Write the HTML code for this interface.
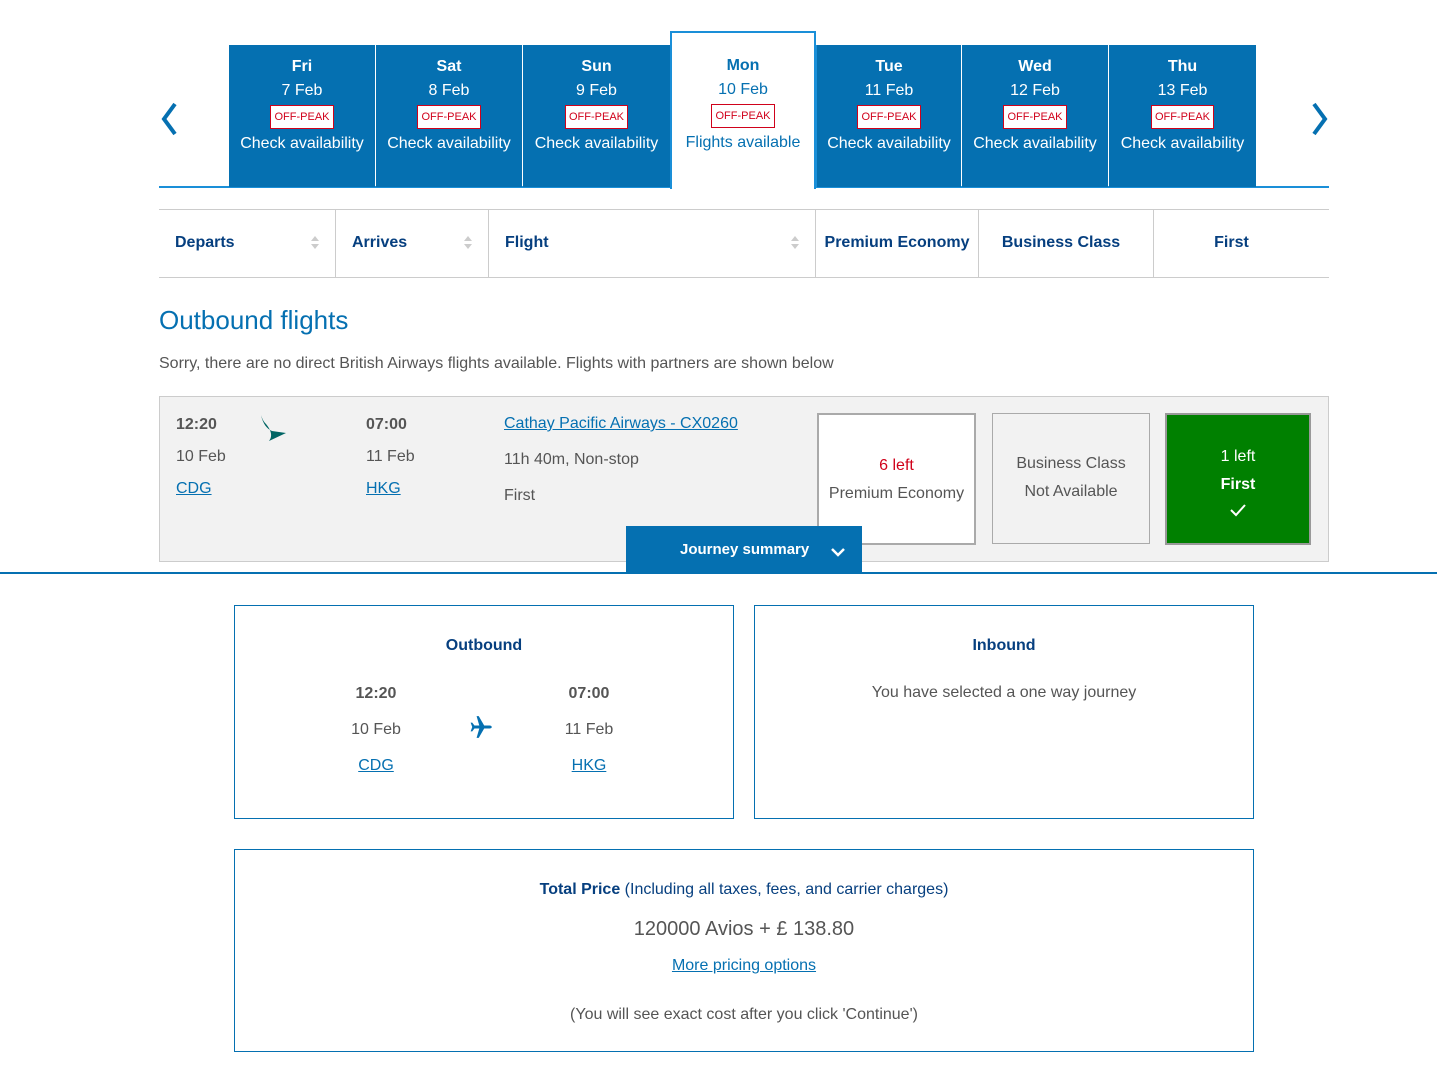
<!DOCTYPE html>
<html><head><meta charset="utf-8"><style>
*{box-sizing:border-box;margin:0;padding:0}
body{width:1437px;height:1078px;background:#fff;font-family:"Liberation Sans",Arial,sans-serif;color:#555;position:relative;overflow:hidden}
.a{position:absolute}
.tab{position:absolute;top:45px;height:142px;background:#0570b1;color:#fff;text-align:center;font-size:16px}
.tab .d{font-weight:bold;margin-top:11px;line-height:22px}
.tab .dt{line-height:25px}
.op{display:inline-block;background:#fff;border:1px solid #d0021b;color:#d0021b;font-size:11px;padding:0 3px;height:24px;line-height:22px;margin-top:2px}
.tab .ca{line-height:30px;font-size:16px}
.hd{position:absolute;top:209px;height:69px;border-top:1px solid #ccc;border-bottom:1px solid #ccc;border-left:1px solid #ccc;color:#063f7f;font-weight:bold;font-size:16px;line-height:66px}
.sort{position:absolute;right:16px;top:26px;width:8px}
.sort:before{content:"";position:absolute;top:0;left:0;border:4px solid transparent;border-bottom:5px solid #ccc;border-top:0}
.sort:after{content:"";position:absolute;top:8px;left:0;border:4px solid transparent;border-top:5px solid #ccc;border-bottom:0}
a{color:#0570b1;text-decoration:underline}
.box{position:absolute;border:1px solid #0570b1;text-align:center}
</style></head><body>
<svg class="a" style="left:156px;top:101px" width="24" height="38"><path d="M19 3 L8 18 L19 33" fill="none" stroke="#0570b1" stroke-width="4"/></svg>
<svg class="a" style="left:1309px;top:101px" width="24" height="38"><path d="M5 3 L16 18 L5 33" fill="none" stroke="#0570b1" stroke-width="4"/></svg>
<div class="a" style="left:159px;top:186px;width:1170px;height:2px;background:#1a8fd8"></div>
<div class="tab" style="left:229px;width:146px"><div class="d">Fri</div><div class="dt">7 Feb</div><div class="op">OFF-PEAK</div><div class="ca">Check availability</div></div>
<div class="tab" style="left:376px;width:146px"><div class="d">Sat</div><div class="dt">8 Feb</div><div class="op">OFF-PEAK</div><div class="ca">Check availability</div></div>
<div class="tab" style="left:523px;width:147px"><div class="d">Sun</div><div class="dt">9 Feb</div><div class="op">OFF-PEAK</div><div class="ca">Check availability</div></div>
<div class="tab" style="left:670px;top:31px;height:158px;width:146px;background:#fff;border:2px solid #1a8fd8;border-bottom:none;color:#0570b1"><div class="d" style="margin-top:22px;color:#0570b1">Mon</div><div class="dt">10 Feb</div><div class="op">OFF-PEAK</div><div class="ca">Flights available</div></div>
<div class="tab" style="left:815px;width:146px;border-left:2px solid #1a8fd8"><div class="d">Tue</div><div class="dt">11 Feb</div><div class="op">OFF-PEAK</div><div class="ca">Check availability</div></div>
<div class="tab" style="left:962px;width:146px"><div class="d">Wed</div><div class="dt">12 Feb</div><div class="op">OFF-PEAK</div><div class="ca">Check availability</div></div>
<div class="tab" style="left:1109px;width:147px"><div class="d">Thu</div><div class="dt">13 Feb</div><div class="op">OFF-PEAK</div><div class="ca">Check availability</div></div>

<div class="hd" style="left:159px;width:176px;border-left:none;padding-left:16px">Departs<span class="sort"></span></div>
<div class="hd" style="left:335px;width:153px;padding-left:16px">Arrives<span class="sort"></span></div>
<div class="hd" style="left:488px;width:327px;padding-left:16px">Flight<span class="sort"></span></div>
<div class="hd" style="left:815px;width:163px;text-align:center">Premium Economy</div>
<div class="hd" style="left:978px;width:175px;text-align:center;padding-right:10px">Business Class</div>
<div class="hd" style="left:1153px;width:176px;text-align:center;padding-right:20px">First</div>

<div class="a" style="left:159px;top:305px;font-size:26px;color:#0570b1">Outbound flights</div>
<div class="a" style="left:159px;top:355px;font-size:16px;color:#555">Sorry, there are no direct British Airways flights available. Flights with partners are shown below</div>

<div class="a" style="left:159px;top:396px;width:1170px;height:166px;background:#f2f2f2;border:1px solid #ccc"></div>
<div class="a" style="left:176px;top:409px;font-size:16px;line-height:32px"><b>12:20</b><br>10 Feb<br><a>CDG</a></div>
<svg class="a" style="left:258px;top:412px" width="32" height="32"><path d="M3 3 C5 12 9 17 14 19 L28 21 L11 29 C15 24 13 18 8 12 C5 9 4 6 3 3Z" fill="#006564"/></svg>
<div class="a" style="left:366px;top:409px;font-size:16px;line-height:32px"><b>07:00</b><br>11 Feb<br><a>HKG</a></div>
<div class="a" style="left:504px;top:406px;font-size:16px;line-height:36px"><a>Cathay Pacific Airways - CX0260</a><br>11h 40m, Non-stop<br>First</div>
<div class="a" style="left:817px;top:413px;width:159px;height:132px;background:#fff;border:2px solid #aaa;text-align:center;font-size:16px;line-height:28px;padding-top:37px"><span style="color:#d0021b">6 left</span><br>Premium Economy</div>
<div class="a" style="left:992px;top:413px;width:158px;height:131px;border:1px solid #aaa;text-align:center;font-size:16px;line-height:28px;padding-top:36px">Business Class<br>Not Available</div>
<div class="a" style="left:1165px;top:413px;width:146px;height:132px;background:#008000;border:2px solid #999;text-align:center;font-size:16px;line-height:28px;padding-top:28px;color:#fff">1 left<br><b>First</b><br><svg width="18" height="14"><path d="M2 7 L7 12 L16 2" fill="none" stroke="#fff" stroke-width="2"/></svg></div>
<div class="a" style="left:0;top:572px;width:1437px;height:2px;background:#0570b1"></div>
<div class="a" style="left:626px;top:526px;width:236px;height:48px;background:#0570b1;color:#fff;font-size:15px;line-height:48px;padding-left:54px;font-weight:bold">Journey summary<svg class="a" style="left:204px;top:20px" width="16" height="12"><path d="M2 3 L8 9 L14 3" fill="none" stroke="#fff" stroke-width="2.5"/></svg></div>

<div class="box" style="left:234px;top:605px;width:500px;height:214px">
<div style="margin-top:31px;font-size:16px;font-weight:bold;color:#063f7f">Outbound</div>
<div class="a" style="left:100px;top:70px;width:82px;text-align:center;font-size:16px;line-height:36px"><b>12:20</b><br>10 Feb<br><a>CDG</a></div>
<div class="a" style="left:313px;top:70px;width:82px;text-align:center;font-size:16px;line-height:36px"><b>07:00</b><br>11 Feb<br><a>HKG</a></div>
<svg class="a" style="left:234px;top:108px" width="26" height="26" viewBox="0 0 24 24"><path d="M21 12 C21 11 20 10.6 19 10.6 L14 10.6 L9 2 L7 2 L9.5 10.6 L5 10.6 L3 8 L1.5 8 L3 12 L1.5 16 L3 16 L5 13.4 L9.5 13.4 L7 22 L9 22 L14 13.4 L19 13.4 C20 13.4 21 13 21 12Z" fill="#0570b1"/></svg>
</div>
<div class="box" style="left:754px;top:605px;width:500px;height:214px">
<div style="margin-top:31px;font-size:16px;font-weight:bold;color:#063f7f">Inbound</div>
<div style="margin-top:29px;font-size:16px">You have selected a one way journey</div>
</div>
<div class="box" style="left:234px;top:849px;width:1020px;height:203px">
<div style="margin-top:31px;font-size:16px;color:#063f7f"><b>Total Price</b> (Including all taxes, fees, and carrier charges)</div>
<div style="margin-top:19px;font-size:20px">120000 Avios + £ 138.80</div>
<div style="margin-top:16px;font-size:16px"><a>More pricing options</a></div>
<div style="margin-top:31px;font-size:16px">(You will see exact cost after you click 'Continue')</div>
</div>
</body></html>
